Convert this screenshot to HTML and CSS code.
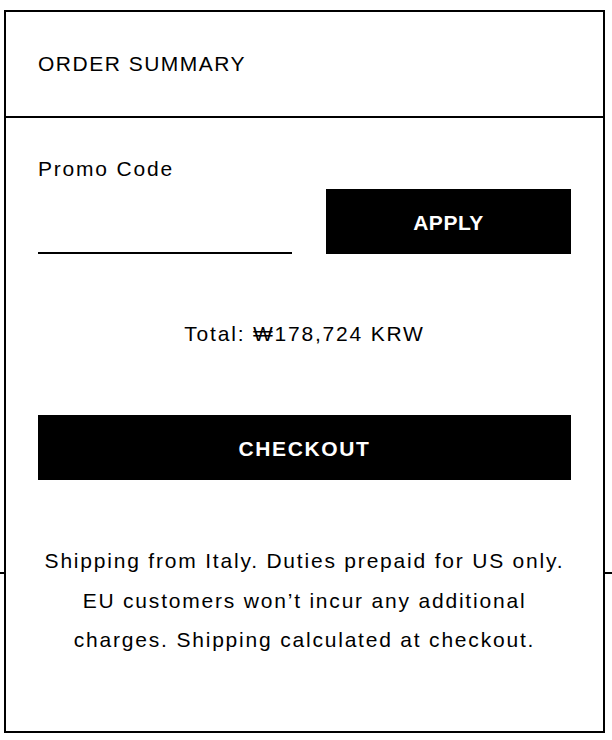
FILE: index.html
```html
<!DOCTYPE html>
<html lang="en">
<head>
<meta charset="utf-8">
<title>Order Summary</title>
<link rel="stylesheet" href="styles.css">
</head>
<body>
<div class="stage">
  <div class="rule"></div>
  <section class="summary">
    <header class="summary-head">
      <h2 class="summary-title">ORDER SUMMARY</h2>
    </header>
    <div class="summary-body">
      <label class="promo-label" for="promo">Promo Code</label>
      <div class="promo-row">
        <input class="promo-input" id="promo" type="text">
        <button class="btn btn-apply" type="button">APPLY</button>
      </div>
      <p class="total">Total: ₩178,724 KRW</p>
      <button class="btn btn-checkout" type="button">CHECKOUT</button>
      <p class="note">Shipping from Italy. Duties prepaid for US only. EU customers won’t incur any additional charges. Shipping calculated at checkout.</p>
    </div>
  </section>
</div>
</body>
</html>
```

FILE: styles.css
```css
html, body {
  margin: 0;
  padding: 0;
  background: #fff;
}

body {
  width: 612px;
  font-family: "Liberation Sans", Arial, sans-serif;
  color: #000;
  font-size: 21px;
  letter-spacing: 1.8px;
}

.stage {
  display: grid;
}

.rule {
  grid-area: 1 / 1;
  align-self: start;
  height: 2px;
  margin-top: 572px;
  background: #000;
}

.summary {
  grid-area: 1 / 1;
  z-index: 1;
  box-sizing: border-box;
  width: 601px;
  height: 723px;
  margin: 10px 0 7px 4px;
  border: 2px solid #000;
  background: #fff;
}

.summary-head {
  box-sizing: border-box;
  height: 106px;
  display: flex;
  align-items: center;
  padding: 0 32px;
  border-bottom: 2px solid #000;
}

.summary-title {
  margin: 0;
  font-size: 21px;
  font-weight: normal;
  line-height: 24px;
  letter-spacing: 1.5px;
}

.summary-body {
  padding: 39px 32px 0;
}

.promo-label {
  display: block;
  line-height: 24px;
}

.promo-row {
  display: flex;
  justify-content: space-between;
  align-items: flex-end;
  height: 65px;
  margin-top: 8px;
}

.promo-input {
  box-sizing: border-box;
  width: 254px;
  height: 40px;
  padding: 0;
  border: 0;
  border-bottom: 2px solid #000;
  outline: none;
  background: transparent;
  font: inherit;
}

.btn {
  display: block;
  box-sizing: border-box;
  height: 65px;
  padding: 2px 0 0;
  border: 0;
  background: #000;
  color: #fff;
  font-family: "Liberation Sans", Arial, sans-serif;
  font-size: 21px;
  font-weight: bold;
  cursor: pointer;
}

.btn-apply {
  width: 245px;
  letter-spacing: 0.5px;
}

.btn-checkout {
  width: 100%;
  margin-top: 69px;
  letter-spacing: 1.6px;
}

.total {
  margin: 68px 0 0;
  line-height: 24px;
  text-align: center;
}

.note {
  margin: 61px 0 0;
  line-height: 39.5px;
  text-align: center;
}
```
